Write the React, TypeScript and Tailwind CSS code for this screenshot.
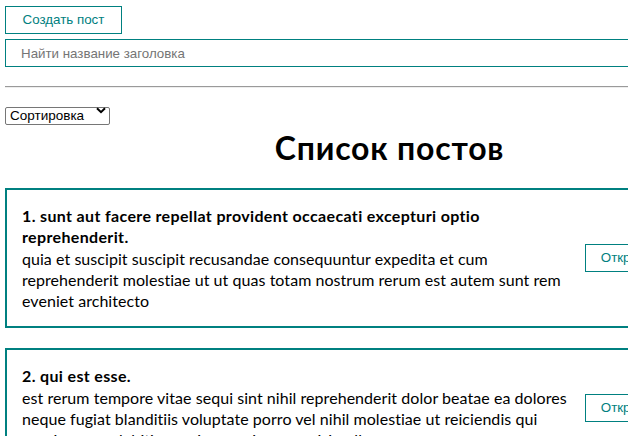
import React from "react";

const posts = [
  {
    id: 1,
    title: "sunt aut facere repellat provident occaecati excepturi optio reprehenderit.",
    body: "quia et suscipit suscipit recusandae consequuntur expedita et cum reprehenderit molestiae ut ut quas totam nostrum rerum est autem sunt rem eveniet architecto",
  },
  {
    id: 2,
    title: "qui est esse.",
    body: "est rerum tempore vitae sequi sint nihil reprehenderit dolor beatae ea dolores neque fugiat blanditiis voluptate porro vel nihil molestiae ut reiciendis qui aperiam non debitis possimus qui neque nisi nulla",
  },
  {
    id: 3,
    title: "ea molestias quasi exercitationem repellat qui ipsa sit aut.",
    body: "et iusto sed quo iure voluptatem occaecati omnis eligendi aut ad voluptatem doloribus vel accusantium quis pariatur molestiae porro eius odio et labore et velit aut",
  },
];

const btn =
  "h-[28px] shrink-0 border border-[#008080] bg-white px-[15px] text-[13.33px] leading-[16px] text-[#008080] [font-family:'Liberation_Sans',Arial,sans-serif]";

export default function App() {
  return (
    <div className="min-h-screen w-full overflow-hidden bg-white">
      <div className="ml-[5px] flex w-[769px] flex-col pt-[6px]">
        <div>
          <button className={`${btn} w-[117px] text-[13.8px]`}>Создать пост</button>
        </div>
        <input
          className="mt-[5px] h-[28px] w-full border border-[#008080] px-[15px] text-[13.33px] text-black outline-none placeholder:text-[#757575] [font-family:'Liberation_Sans',Arial,sans-serif]"
          placeholder="Найти название заголовка"
        />
        <hr className="mt-[19px] h-0 border-t border-b border-t-[#9a9a9a] border-b-[#eeeeee]" />
        <div className="relative mt-[14px] w-[105px]">
          <select className="h-[18px] w-[105px] appearance-none rounded-[2px] border border-[#767676] bg-white pl-[4px] text-[13.5px] leading-[16px] text-black [font-family:'Liberation_Sans',Arial,sans-serif]">
            <option>Сортировка</option>
            <option>По названию</option>
            <option>По описанию</option>
          </select>
          <svg
            className="pointer-events-none absolute right-[4px] top-[5px]"
            width="10"
            height="7"
            viewBox="0 0 10 7"
          >
            <path d="M1 1.2 L5 5.2 L9 1.2" fill="none" stroke="#000" strokeWidth="2" />
          </svg>
        </div>
        <h1 className="mt-[1px] text-center text-[32px] font-bold leading-[42px] tracking-[0.8px] text-black [font-family:Lato,'Open_Sans',sans-serif]">
          Список постов
        </h1>
        <div className="mt-[19px] flex flex-col gap-[20px]">
          {posts.map((p) => (
            <div
              key={p.id}
              className="flex items-center gap-[9px] border-2 border-[#008080] p-[15px] text-[16px] leading-[21.3px] tracking-[0.05px] text-black [font-family:Lato,'Open_Sans',sans-serif]"
            >
              <div className="min-w-0 flex-1">
                <div className="font-bold tracking-[0.35px]">
                  {p.id}. {p.title}
                </div>
                <div>{p.body}</div>
              </div>
              <div className="flex shrink-0 gap-[5px]">
                <button className={`${btn} tracking-normal`}>Открыть</button>
                <button className={`${btn} tracking-normal`}>Удалить</button>
              </div>
            </div>
          ))}
        </div>
      </div>
    </div>
  );
}
